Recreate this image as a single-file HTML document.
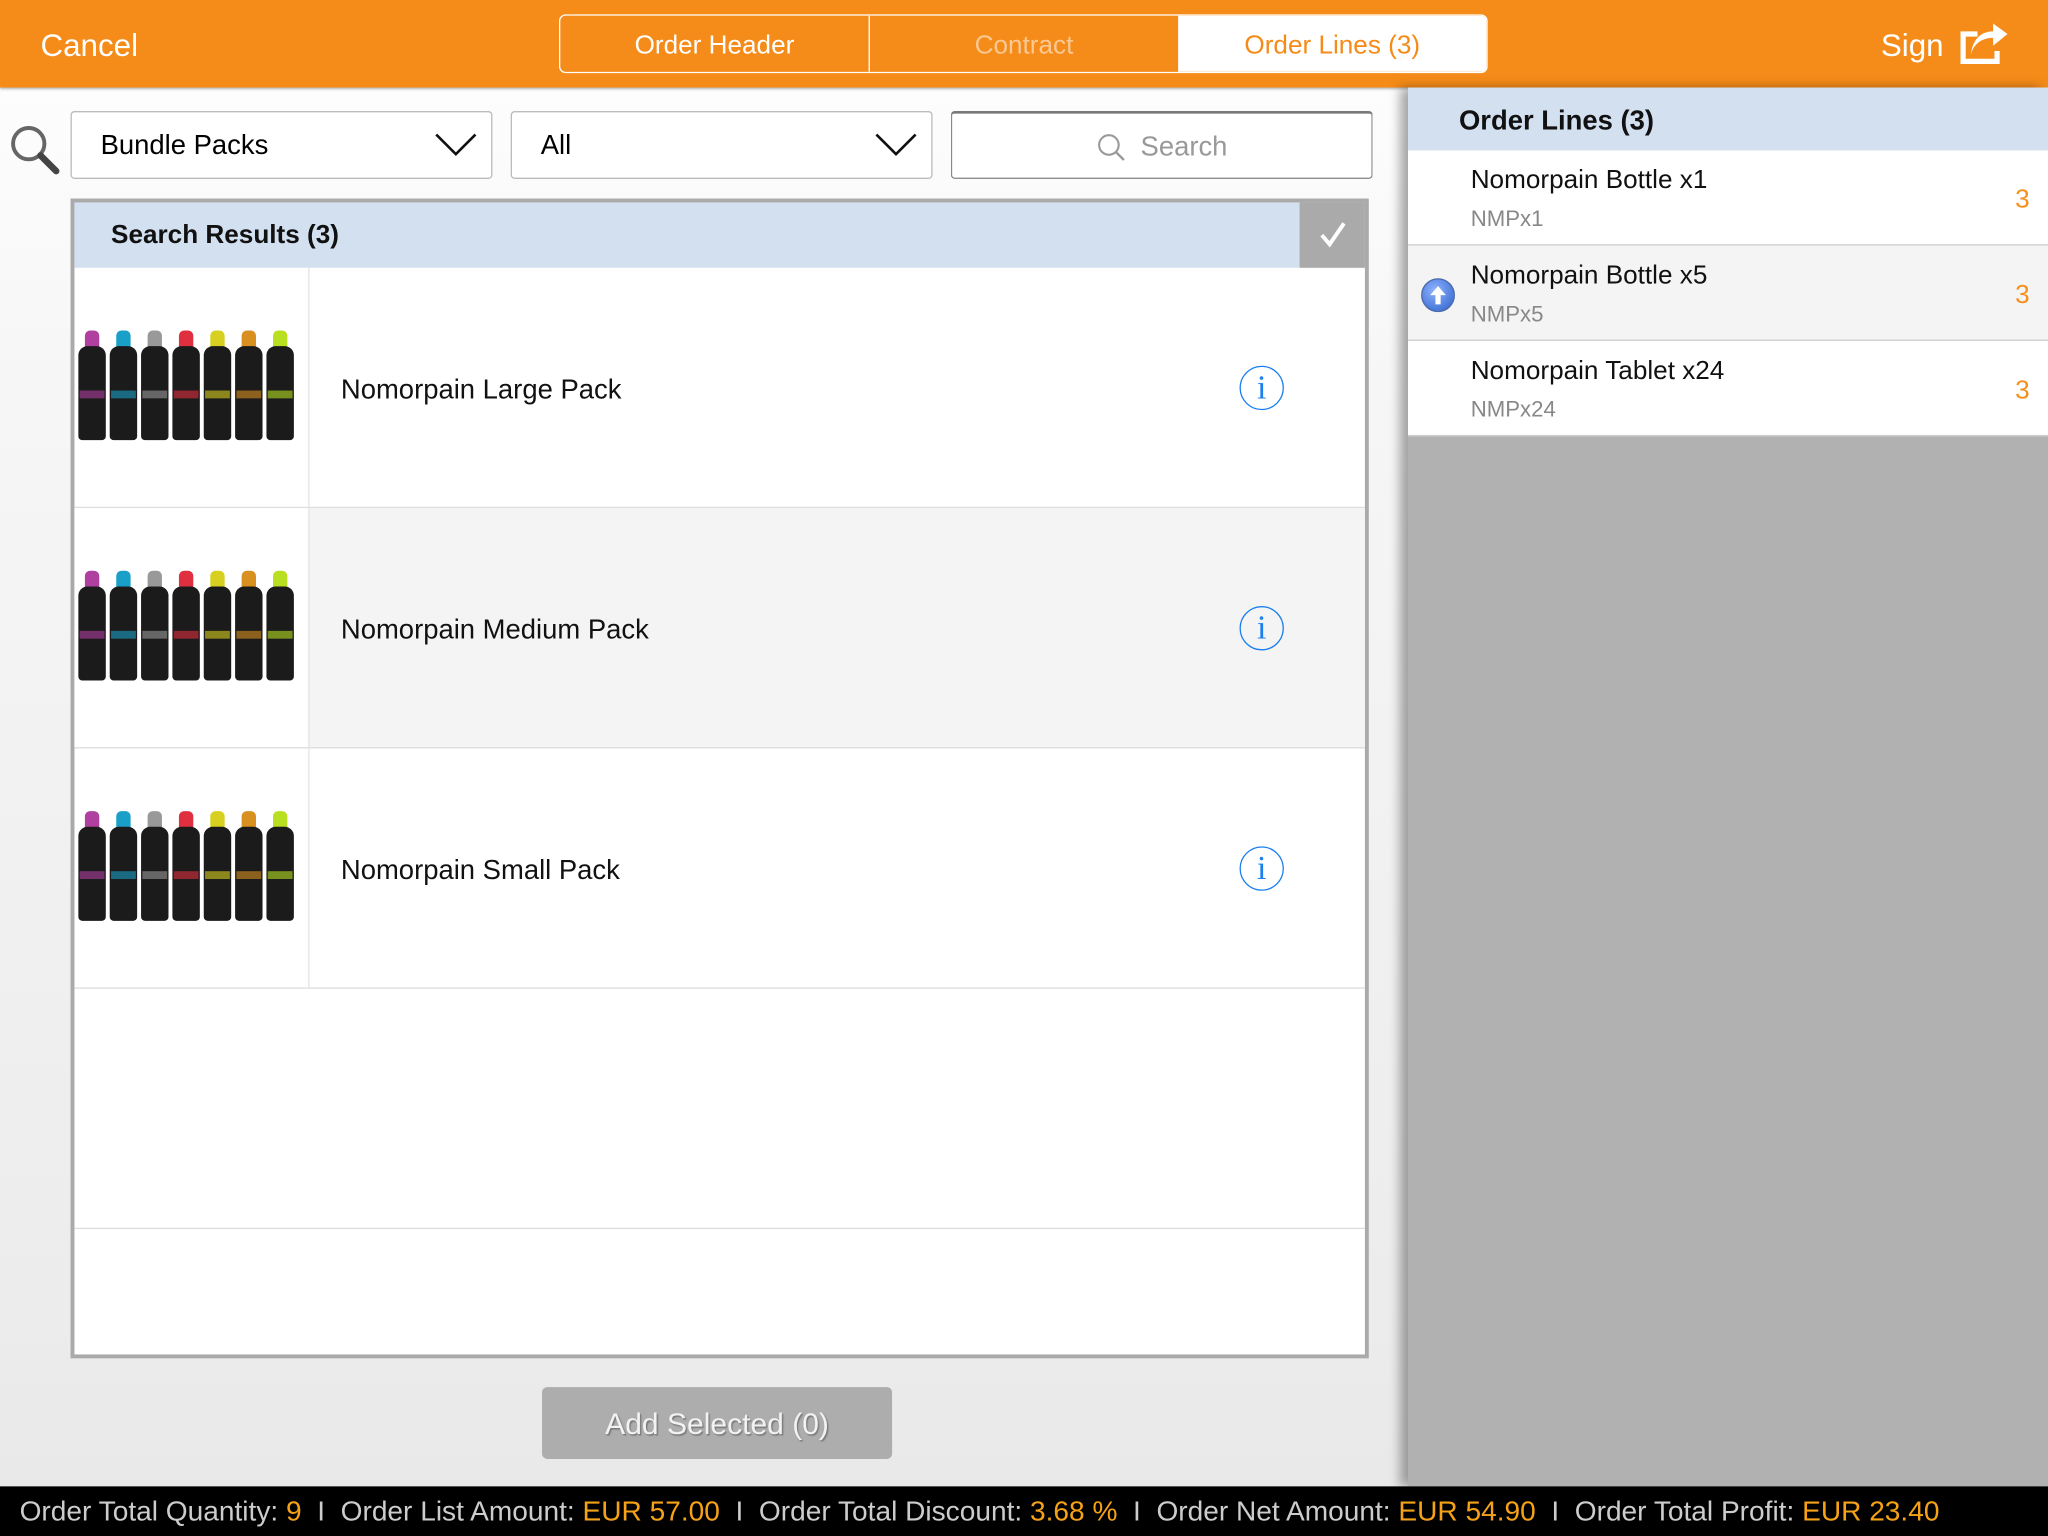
<!DOCTYPE html>
<html><head><meta charset="utf-8"><style>
*{box-sizing:border-box;margin:0;padding:0}
html,body{width:2048px;height:1536px;overflow:hidden;background:#eee}
#w{position:absolute;left:0;top:0;width:1568px;height:1176px;transform:scale(1.306122);transform-origin:0 0;font-family:"Liberation Sans",sans-serif;overflow:hidden;background:linear-gradient(180deg,#fff 0,#f6f6f6 300px,#ececec 1000px,#e8e8e8 1176px)}
.a{position:absolute}
.top{left:0;top:0;width:1568px;height:67px;background:#f58b18;box-shadow:0 1px 2px rgba(0,0,0,.3)}
.seg{left:428px;top:11px;width:711px;height:45px;border:1px solid #fff;border-radius:5px;overflow:hidden;display:flex}
.seg div{flex:1;display:flex;align-items:center;justify-content:center;font-size:20px;color:#fff;padding-top:4px}
.dd{background:#fff;border:1px solid #bbb;border-radius:3px;height:52px;top:85px;width:323px;font-size:21px;display:flex;align-items:center;padding-left:22px;padding-top:2px}
.tbl{left:54px;top:152px;width:994px;height:888px;border:3px solid #aaa;background:#fff}
.row{position:absolute;left:0;width:988px;height:184px;border-bottom:1px solid #ddd}
.row .img{position:absolute;left:0;top:0;width:180px;height:183px;border-right:1px solid #e3e3e3}
.row .t{position:absolute;left:204px;top:2px;line-height:183px;font-size:21px;color:#111}
.info{position:absolute;left:892px;top:75px;width:34px;height:34px;border:1.5px solid #1a7ff0;border-radius:50%;color:#1a7ff0;font-family:"Liberation Serif",serif;font-size:26px;text-align:center;line-height:32px}
.bottles{position:absolute;left:3px;top:48px;display:flex;gap:3px}
.b{width:21px;height:84px;position:relative}
.b i{position:absolute;left:5px;top:0;width:11px;height:14px;border-radius:4px 4px 2px 2px}
.b s{position:absolute;left:0;top:12px;width:21px;height:72px;background:#1b1b1b;border-radius:7px 7px 3px 3px}
.b u{position:absolute;left:1px;top:46px;width:19px;height:6px}
.right{left:1078px;top:67px;width:490px;height:1071px;background:#b1b1b1;box-shadow:-6px 0 8px rgba(0,0,0,.35)}
.ol{position:absolute;left:0;width:490px;height:73px;border-bottom:1px solid #ccc}
.ol .n{position:absolute;left:48px;top:12px;font-size:20px;color:#111}
.ol .c{position:absolute;left:48px;top:43px;font-size:17px;color:#888}
.ol .q{position:absolute;right:14px;top:27px;font-size:20px;color:#f5901e}
.bot{left:0;top:1138px;width:1568px;height:38px;background:#000;color:#ccc;font-size:21.5px;line-height:38px;padding-left:15px;white-space:nowrap;letter-spacing:0px}
.bot b{font-weight:normal;color:#f5a217}
</style></head><body><div id="w">
<div class="a top">
 <div class="a" style="left:31px;top:22px;font-size:24px;color:#fff">Cancel</div>
 <div class="a seg"><div style="border-right:1px solid #fff">Order Header</div><div style="color:#fbc893">Contract</div><div style="background:#fff;color:#f58b18">Order Lines (3)</div></div>
 <div class="a" style="left:1440px;top:22px;font-size:24px;color:#fff">Sign</div>
 <svg class="a" style="left:1500px;top:18px" width="38" height="32" viewBox="0 0 38 32"><path d="M14 8H3v21h26v-8" fill="none" stroke="#fff" stroke-width="4"/><path d="M9 24c2-9 9-13 17-13v6l11-9L26 0v6C16 6 10 13 9 24z" fill="#fff"/></svg>
</div>
<svg class="a" style="left:6px;top:94px" width="40" height="40" viewBox="0 0 40 40"><circle cx="16" cy="16" r="12" fill="none" stroke="#666" stroke-width="3"/><path d="M25 25l12 12" stroke="#444" stroke-width="5" stroke-linecap="round"/></svg>
<div class="a dd" style="left:54px">Bundle Packs<svg class="a" style="left:278px;top:14px" width="32" height="22"><path d="M1 3l15 15L31 3" fill="none" stroke="#111" stroke-width="2"/></svg></div>
<div class="a dd" style="left:391px">All<svg class="a" style="left:278px;top:14px" width="32" height="22"><path d="M1 3l15 15L31 3" fill="none" stroke="#111" stroke-width="2"/></svg></div>
<div class="a dd" style="left:728px;border:1px solid #888;border-top:2px solid #777;justify-content:center;padding-left:0;color:#999"><svg width="24" height="24" style="margin-right:10px"><circle cx="10" cy="10" r="7.5" fill="none" stroke="#999" stroke-width="1.6"/><path d="M15.5 15.5l6 6" stroke="#999" stroke-width="1.8"/></svg>Search</div>
<div class="a tbl">
 <div class="a" style="left:0;top:0;width:988px;height:50px;background:#d3e0f0"><div class="a" style="left:28px;top:14px;font-size:20px;font-weight:bold;color:#111">Search Results (3)</div>
 <div class="a" style="left:938px;top:0;width:50px;height:50px;background:#aaa"><svg width="50" height="50"><path d="M17 25l6 7 11-16" fill="none" stroke="#fff" stroke-width="3"/></svg></div></div>
 <div class="row" style="top:50px"><div class="img"><div class="bottles"></div></div><div class="t">Nomorpain Large Pack</div><div class="info">i</div></div>
 <div class="row" style="top:234px;background:#f4f4f4"><div class="img" style="background:#fff"><div class="bottles"></div></div><div class="t">Nomorpain Medium Pack</div><div class="info">i</div></div>
 <div class="row" style="top:418px"><div class="img"><div class="bottles"></div></div><div class="t">Nomorpain Small Pack</div><div class="info">i</div></div>
 <div class="row" style="top:602px"></div>
</div>
<div class="a" style="left:415px;top:1062px;width:268px;height:55px;background:#adadad;border-radius:4px;color:#f2f2f2;font-size:23px;text-align:center;line-height:57px;text-shadow:1px 1px 1px #777">Add Selected (0)</div>
<div class="a right">
 <div class="a" style="left:0;top:0;width:490px;height:48px;background:#d3e0f0"><div class="a" style="left:39px;top:14px;font-size:21px;font-weight:bold;color:#111">Order Lines (3)</div></div>
 <div class="ol" style="top:48px;background:#fff"><div class="n">Nomorpain Bottle x1</div><div class="c">NMPx1</div><div class="q">3</div></div>
 <div class="ol" style="top:121px;background:#f4f4f4"><div class="a" style="left:10px;top:25px;width:26px;height:26px;border-radius:50%;background:radial-gradient(circle at 40% 35%,#8fb3ff,#2b5fc8);border:1px solid #4a6aa8"><svg width="24" height="24"><path d="M12 5l-6 7h4v7h4v-7h4z" fill="#fff"/></svg></div><div class="n">Nomorpain Bottle x5</div><div class="c">NMPx5</div><div class="q">3</div></div>
 <div class="ol" style="top:194px;background:#fff"><div class="n">Nomorpain Tablet x24</div><div class="c">NMPx24</div><div class="q">3</div></div>
</div>
<div class="a bot">Order Total Quantity: <b>9</b> &nbsp;I&nbsp; Order List Amount: <b>EUR 57.00</b> &nbsp;I&nbsp; Order Total Discount: <b>3.68 %</b> &nbsp;I&nbsp; Order Net Amount: <b>EUR 54.90</b> &nbsp;I&nbsp; Order Total Profit: <b>EUR 23.40</b></div>
</div>
<script>
var cols=['#b040a0','#1aa0c8','#999','#e03040','#d8d020','#d89020','#b8e020'];
document.querySelectorAll('.bottles').forEach(function(e){var h='';cols.forEach(function(c){h+='<div class="b"><i style="background:'+c+'"></i><s></s><u style="background:'+c+';opacity:.6"></u></div>'});e.innerHTML=h;});
</script>
</body></html>
